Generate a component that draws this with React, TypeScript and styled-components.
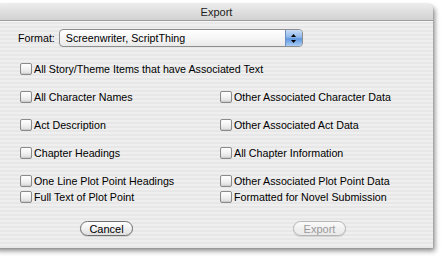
import React from "react";
import styled, { createGlobalStyle } from "styled-components";

const Global = createGlobalStyle`
  html, body { margin: 0; padding: 0; background: #ffffff; }
  body { font-family: "Liberation Sans", Arial, sans-serif; overflow: hidden; }
`;

const Page = styled.div`
  width: 442px;
  height: 257px;
  padding-top: 4px;
  box-sizing: border-box;
`;

const Window = styled.div`
  margin-left: -6px;
  width: 439px;
  height: 244px;
  border-radius: 5px 5px 0 0;
  display: flex;
  flex-direction: column;
  box-shadow: 2px 3px 5px rgba(0, 0, 0, 0.45), 0 0 1px rgba(0, 0, 0, 0.4);
  background: repeating-linear-gradient(
    to bottom,
    #efefef 0px,
    #efefef 2px,
    #e7e7e7 2px,
    #e7e7e7 4px
  );
  overflow: hidden;
`;

const TitleBar = styled.div`
  height: 15px;
  flex: none;
  display: flex;
  align-items: center;
  justify-content: center;
  background: linear-gradient(to bottom, #ececec 0%, #dedede 50%, #d2d2d2 100%);
  border-bottom: 1px solid #9c9c9c;
  box-shadow: 0 1px 0 #f8f8f8;
  font-size: 11px;
  color: #222;
  padding-left: 6px;
  padding-bottom: 1px;
`;

const Body = styled.div`
  padding-left: 26px;
  display: flex;
  flex-direction: column;
  font-size: 10.7px;
  color: #000;
`;

const FormatRow = styled.div`
  margin-top: 8px;
  display: flex;
  align-items: center;
  gap: 4px;
  height: 18px;
  margin-left: -2px;
`;

const Popup = styled.div`
  width: 242px;
  height: 16px;
  border: 1px solid #8d8d8d;
  border-radius: 4px;
  background: linear-gradient(to bottom, #ffffff 0%, #f4f4f4 60%, #e9e9e9 100%);
  display: flex;
  align-items: center;
  box-sizing: content-box;
  overflow: hidden;
`;

const PopupText = styled.span`
  flex: 1;
  padding-left: 6px;
`;

const PopupArrows = styled.div`
  width: 16px;
  height: 16px;
  display: flex;
  align-items: center;
  justify-content: center;
  border-left: 1px solid #6d8fc4;
  background: linear-gradient(to bottom, #c8dcf6 0%, #8fb7ea 45%, #5e97e0 55%, #a8cdf6 100%);
`;

const Row = styled.label<{ $mt: number }>`
  display: flex;
  align-items: center;
  height: 14px;
  margin-top: ${(p) => p.$mt}px;
  gap: 2px;
`;

const Box = styled.span`
  width: 10px;
  height: 10px;
  flex: none;
  border: 1px solid #8a8a8a;
  border-radius: 2px;
  background: linear-gradient(to bottom, #ffffff 0%, #f2f2f2 50%, #dcdcdc 100%);
  box-shadow: inset 0 -1px 1px rgba(0, 0, 0, 0.08);
`;

const Grid = styled.div`
  display: grid;
  grid-template-columns: 200px 200px;
  margin-top: 14px;
`;

const Col = styled.div`
  display: flex;
  flex-direction: column;
`;

const Buttons = styled.div`
  display: flex;
  margin-top: 17px;
  padding-left: 60px;
  gap: 160px;
`;

const Button = styled.div<{ $disabled?: boolean }>`
  width: 51px;
  height: 13px;
  border: 1px solid ${(p) => (p.$disabled ? "#b5b5b5" : "#6f6f6f")};
  border-radius: 8px;
  display: flex;
  align-items: center;
  justify-content: center;
  background: ${(p) =>
    p.$disabled
      ? "linear-gradient(to bottom, #fbfbfb 0%, #f0f0f0 50%, #e9e9e9 100%)"
      : "linear-gradient(to bottom, #ffffff 0%, #f1f1f1 50%, #dedede 100%)"};
  color: ${(p) => (p.$disabled ? "#9a9a9a" : "#000")};
  font-size: 11px;
  box-shadow: 0 1px 1px rgba(0, 0, 0, 0.12);
`;

const Check = ({ label, mt }: { label: string; mt: number }) => (
  <Row $mt={mt}>
    <Box />
    <span>{label}</span>
  </Row>
);

export default function App() {
  return (
    <>
      <Global />
      <Page>
        <Window>
          <TitleBar>Export</TitleBar>
          <Body>
            <FormatRow>
              <span>Format:</span>
              <Popup>
                <PopupText>Screenwriter, ScriptThing</PopupText>
                <PopupArrows>
                  <svg width="7" height="11" viewBox="0 0 7 11">
                    <path d="M3.5 1 L6 4 L1 4 Z" fill="#000" />
                    <path d="M3.5 10 L6 7 L1 7 Z" fill="#000" />
                  </svg>
                </PopupArrows>
              </Popup>
            </FormatRow>
            <Check label="All Story/Theme Items that have Associated Text" mt={15} />
            <Grid>
              <Col>
                <Check label="All Character Names" mt={0} />
                <Check label="Act Description" mt={14} />
                <Check label="Chapter Headings" mt={14} />
                <Check label="One Line Plot Point Headings" mt={14} />
                <Check label="Full Text of Plot Point" mt={2} />
              </Col>
              <Col>
                <Check label="Other Associated Character Data" mt={0} />
                <Check label="Other Associated Act Data" mt={14} />
                <Check label="All Chapter Information" mt={14} />
                <Check label="Other Associated Plot Point Data" mt={14} />
                <Check label="Formatted for Novel Submission" mt={2} />
              </Col>
            </Grid>
            <Buttons>
              <Button>Cancel</Button>
              <Button $disabled>Export</Button>
            </Buttons>
          </Body>
        </Window>
      </Page>
    </>
  );
}
